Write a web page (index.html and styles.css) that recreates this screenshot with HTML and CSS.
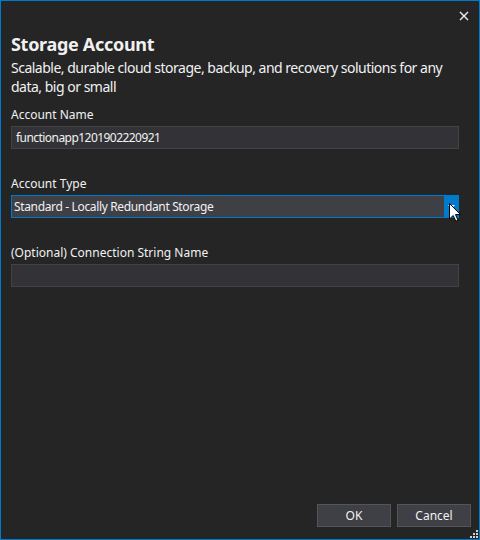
FILE: index.html
```html
<!DOCTYPE html>
<html>
<head>
<meta charset="utf-8">
<link rel="stylesheet" href="styles.css">
</head>
<body>
<div class="window">
  <div class="titlebar">
    <svg class="close" width="10" height="10" viewBox="0 0 10 10"><path d="M1 1L9 9M9 1L1 9" stroke="#f1f1f1" stroke-width="1.4"/></svg>
  </div>
  <div class="content">
    <h1 class="title">Storage Account</h1>
    <p class="desc">Scalable, durable cloud storage, backup, and recovery solutions for any data, big or small</p>
    <div class="field">
      <div class="label">Account Name</div>
      <div class="input name">functionapp1201902220921</div>
    </div>
    <div class="field">
      <div class="label">Account Type</div>
      <div class="select">
        <span class="select-text">Standard - Locally Redundant Storage</span>
        <span class="select-btn"><svg width="7" height="4" viewBox="0 0 7 4"><path d="M0 0L3.5 4L7 0Z" fill="#f1f1f1"/></svg></span>
        <svg class="cursor" width="12" height="19" viewBox="0 0 12 19"><path d="M0.5 0.5V16L4.2 12.5L6.8 18.2L9 17.2L6.5 11.6H11.5Z" fill="#ffffff" stroke="#000" stroke-width="1"/></svg>
      </div>
    </div>
    <div class="field">
      <div class="label">(Optional) Connection String Name</div>
      <div class="input"></div>
    </div>
  </div>
  <div class="footer">
    <div class="btn">OK</div>
    <div class="btn">Cancel</div>
  </div>
  <svg class="grip" width="10" height="10" viewBox="0 0 10 10" fill="#d0d0d0"><rect x="7" y="1" width="2" height="2"/><rect x="4" y="4" width="2" height="2"/><rect x="7" y="4" width="2" height="2"/><rect x="1" y="7" width="2" height="2"/><rect x="4" y="7" width="2" height="2"/><rect x="7" y="7" width="2" height="2"/></svg>
</div>
</body>
</html>
```
FILE: styles.css
```css
html, body { margin: 0; padding: 0; background: #252526; }
.window {
  position: relative;
  width: 480px;
  height: 540px;
  box-sizing: border-box;
  border: 1px solid #007acc;
  background: #252526;
  display: flex;
  flex-direction: column;
  font-family: "Noto Sans", "Open Sans", sans-serif;
  color: #f1f1f1;
}
.titlebar {
  height: 30px;
  display: flex;
  justify-content: flex-end;
  align-items: center;
  padding-right: 10px;
}
.close { display: block; margin-top: -1px; }
.content {
  flex: 1;
  padding: 0 20px 0 10px;
}
.title {
  margin: 0 0 1px 0;
  font-size: 18px;
  font-weight: bold;
  line-height: 26px;
  letter-spacing: -0.3px;
}
.desc {
  margin: 0 0 11px 0;
  font-size: 14px;
  line-height: 19px;
  letter-spacing: -0.5px;
}
.field { margin-bottom: 27px; }
.label {
  font-size: 12px;
  line-height: 16px;
  margin-bottom: 3px;
}
.input {
  height: 23px;
  box-sizing: border-box;
  border: 1px solid #434346;
  background: #333337;
  font-size: 12px;
  line-height: 21px;
  padding: 0 4px;
}
.input.name { letter-spacing: -0.55px; }
.select {
  position: relative;
  height: 23px;
  box-sizing: border-box;
  border: 1px solid #007acc;
  background: #3f3f46;
  font-size: 12px;
  line-height: 21px;
  display: flex;
}
.select-text { flex: 1; padding-left: 2px; letter-spacing: -0.35px; }
.select-btn {
  width: 14px;
  background: #007acc;
  display: flex;
  align-items: center;
  justify-content: center;
}
.cursor { position: absolute; right: -3px; top: 7px; }
.footer {
  display: flex;
  justify-content: flex-end;
  gap: 6px;
  padding: 0 8px 12px 0;
}
.btn {
  width: 74px;
  height: 23px;
  box-sizing: border-box;
  background: #3f3f46;
  border: 1px solid #555559;
  font-size: 12px;
  line-height: 21px;
  text-align: center;
}
.grip { position: absolute; right: 0; bottom: 0; }
```
